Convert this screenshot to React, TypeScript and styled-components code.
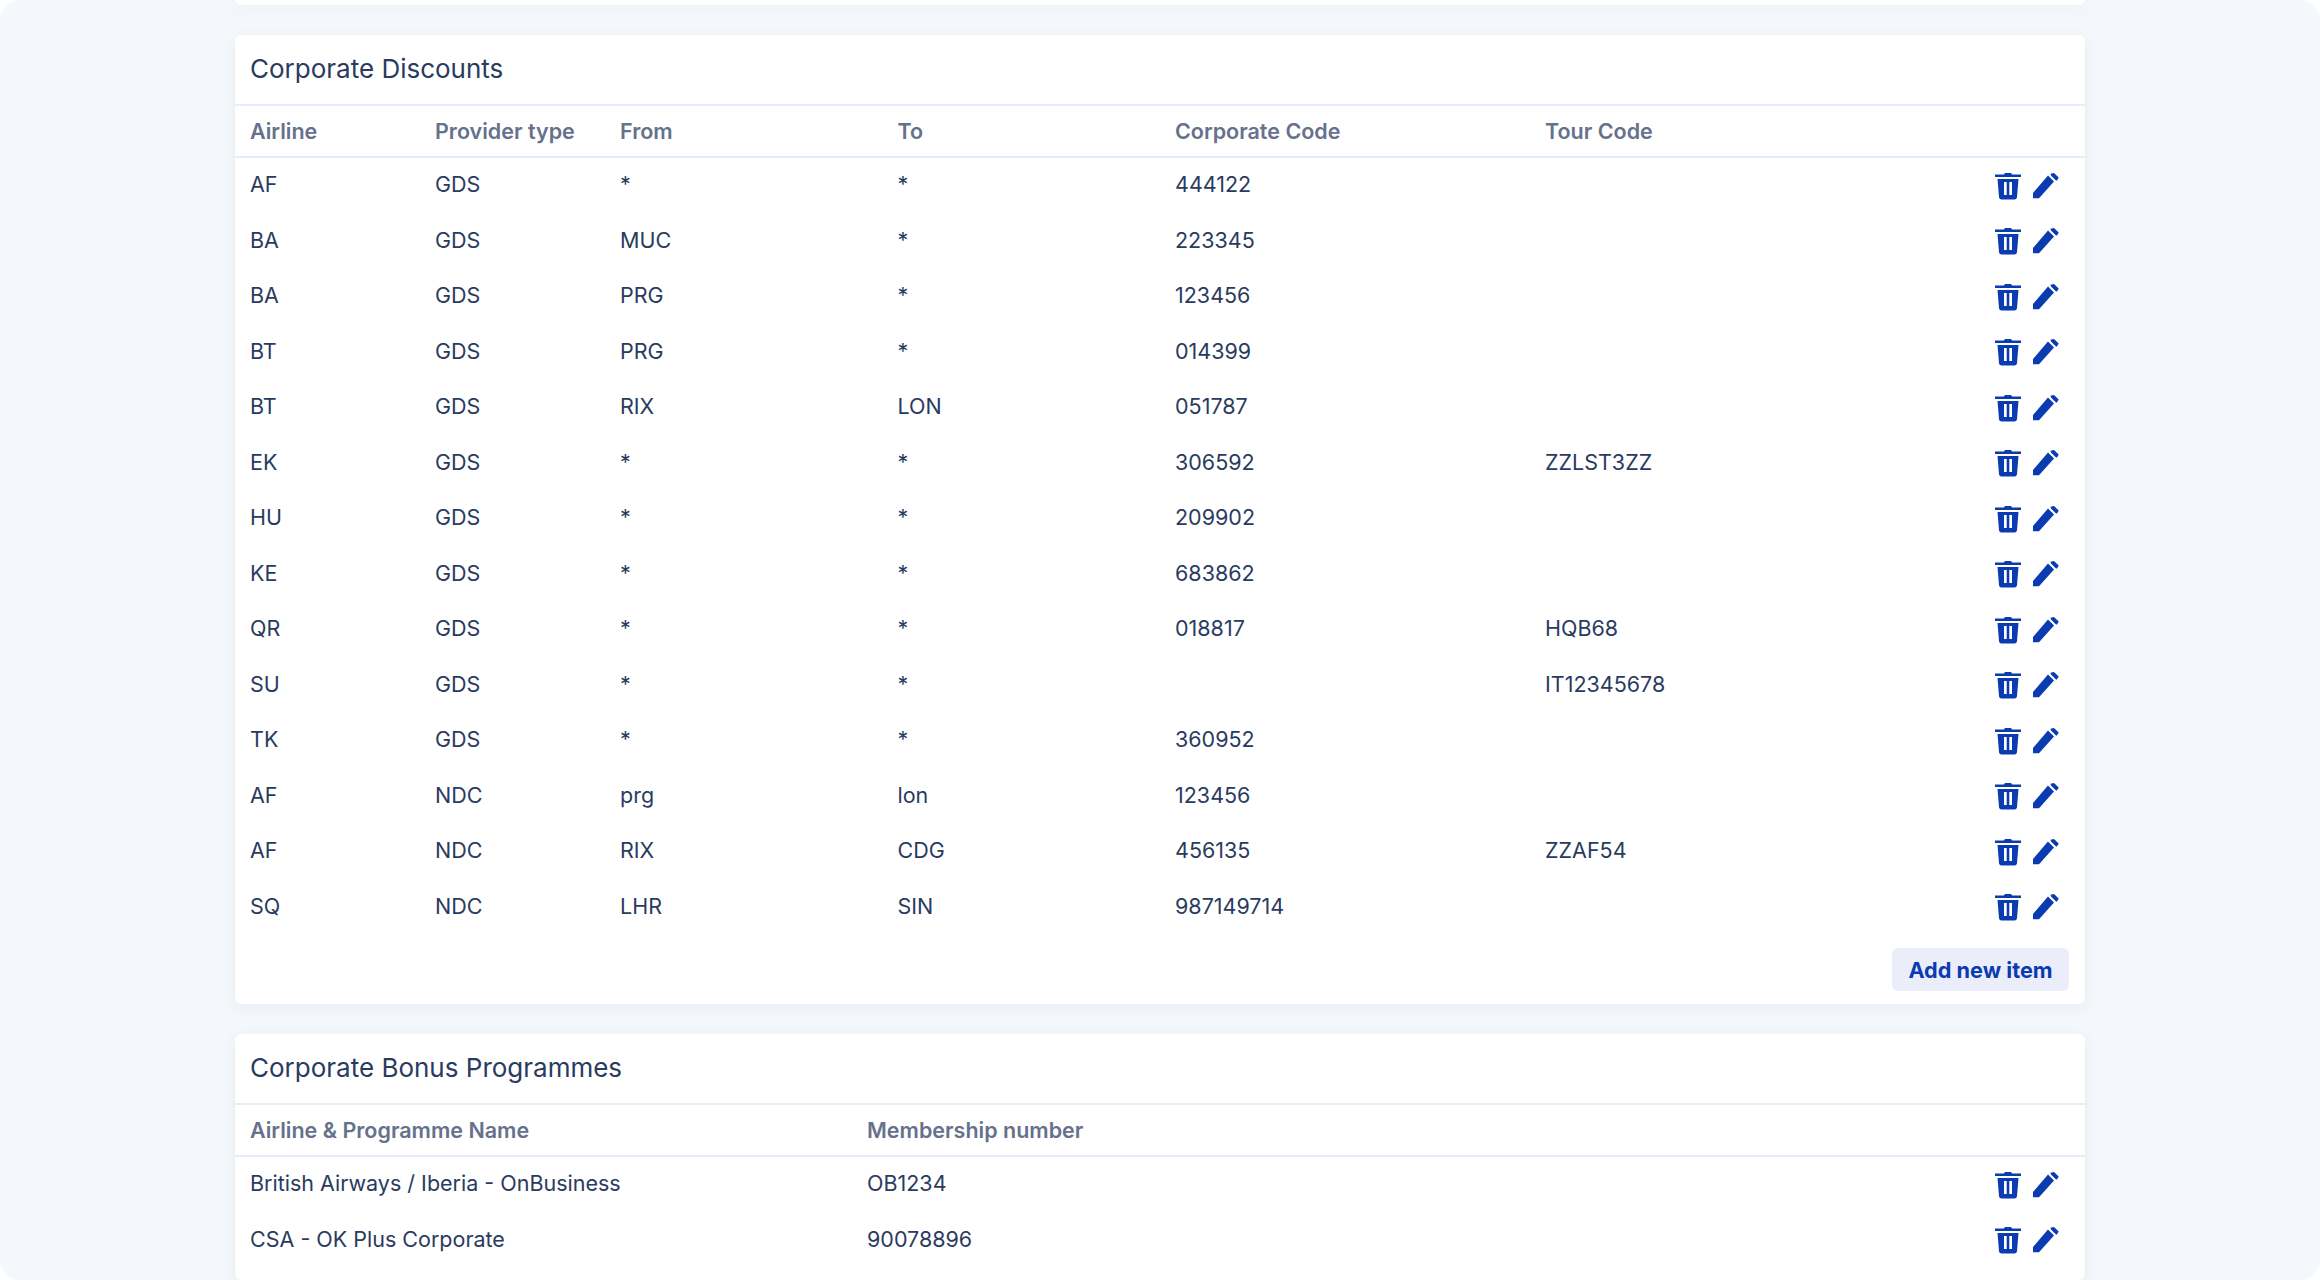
import { createGlobalStyle } from "styled-components"
import styled from "styled-components"

const GlobalStyle = createGlobalStyle`
  html, body {
    margin: 0;
    height: 1280px;
    overflow: hidden;
    background: #fff;
  }
  * {
    box-sizing: border-box;
  }
`

const Page = styled.div`
  display: flex;
  flex-direction: column;
  gap: 30px;
  height: 1280px;
  padding: 0 235px;
  overflow: hidden;
  border-radius: 20px;
  background: #f4f8fc;
  font-family: Inter, "Noto Sans", sans-serif;
  color: #2a3b60;
`

const Card = styled.section`
  background: #fff;
  border-radius: 6px;
  box-shadow: 0 3px 14px rgba(40, 70, 120, 0.07);
`

const TopStub = styled(Card)`
  flex: none;
  height: 5px;
  border-radius: 0 0 6px 6px;
`

const LastCard = styled(Card)`
  flex: 1;
`

const CardTitle = styled.h2`
  margin: 0;
  height: 71px;
  padding: 0 15px 2px;
  display: flex;
  align-items: center;
  font-size: 26px;
  font-weight: 400;
  border-bottom: 2px solid #e4eef8;
`

const Row = styled.div<{ $cols: string }>`
  display: grid;
  grid-template-columns: ${(p) => p.$cols};
  align-items: center;
  padding: 0 15px;
  height: 55.5px;
  font-size: 21.5px;
`

const HeaderRow = styled(Row)`
  height: 52px;
  font-weight: 600;
  color: #66718c;
  border-bottom: 2px solid #e4eef8;
`

const Cell = styled.span`
  margin-bottom: 3px;
`

const Actions = styled.div`
  display: flex;
  justify-content: flex-end;
  align-items: center;
  gap: 12px;
  padding-right: 11px;
`

const Footer = styled.div`
  display: flex;
  justify-content: flex-end;
  padding: 13px 16px 13px;
`

const AddButton = styled.button`
  width: 177px;
  height: 43px;
  border: 0;
  border-radius: 6px;
  background: #ebeefa;
  color: #0b3bb0;
  font-family: inherit;
  font-size: 21.7px;
  font-weight: 700;
`

const TrashIcon = () => (
  <svg width="26" height="28" viewBox="0 0 26 28" fill="#0b3bb0">
    <path d="M9 2.500C9 1.500 10 1 11 1h4c1 0 2 .5 2 1.500H26V5H0V2.500z" />
    <path fillRule="evenodd" d="M2.500 7h21l-1.500 18c-.1 1.500-1 2.500-2.500 2.500h-13C5 27.500 4.100 26.500 4 25zM9 10v13h2.700V10zM14.300 10v13h2.700V10z" />
  </svg>
)

const PencilIcon = () => (
  <svg width="26" height="26" viewBox="0 0 26 26" fill="#0b3bb0">
    <path d="M17.500 .8 L21 0 L25.700 4.500 L24 7.500 L23 7.500 L18 2.500z" />
    <path d="M15 2.500 L21 8.500 L6 25.300 L.6 25.300 Q0 25.300 0 24.700 L0 20z" />
  </svg>
)

const discountCols = "185px 185px 277.500px 277.500px 370px 1fr 80px"
const bonusCols = "617px 1fr 80px"

const discounts = [
  ["AF", "GDS", "*", "*", "444122", ""],
  ["BA", "GDS", "MUC", "*", "223345", ""],
  ["BA", "GDS", "PRG", "*", "123456", ""],
  ["BT", "GDS", "PRG", "*", "014399", ""],
  ["BT", "GDS", "RIX", "LON", "051787", ""],
  ["EK", "GDS", "*", "*", "306592", "ZZLST3ZZ"],
  ["HU", "GDS", "*", "*", "209902", ""],
  ["KE", "GDS", "*", "*", "683862", ""],
  ["QR", "GDS", "*", "*", "018817", "HQB68"],
  ["SU", "GDS", "*", "*", "", "IT12345678"],
  ["TK", "GDS", "*", "*", "360952", ""],
  ["AF", "NDC", "prg", "lon", "123456", ""],
  ["AF", "NDC", "RIX", "CDG", "456135", "ZZAF54"],
  ["SQ", "NDC", "LHR", "SIN", "987149714", ""],
]

const programmes = [
  ["British Airways / Iberia - OnBusiness", "OB1234"],
  ["CSA - OK Plus Corporate", "90078896"],
]

const RowActions = () => (
  <Actions>
    <TrashIcon />
    <PencilIcon />
  </Actions>
)

export default function App() {
  return (
    <Page>
      <GlobalStyle />
      <TopStub />
      <Card>
        <CardTitle>Corporate Discounts</CardTitle>
        <HeaderRow $cols={discountCols}>
          <span>Airline</span>
          <span>Provider type</span>
          <span>From</span>
          <span>To</span>
          <span>Corporate Code</span>
          <span>Tour Code</span>
          <span />
        </HeaderRow>
        {discounts.map((row, i) => (
          <Row $cols={discountCols} key={i}>
            {row.map((cell, j) => <Cell key={j}>{cell}</Cell>)}
            <RowActions />
          </Row>
        ))}
        <Footer>
          <AddButton>Add new item</AddButton>
        </Footer>
      </Card>
      <LastCard>
        <CardTitle>Corporate Bonus Programmes</CardTitle>
        <HeaderRow $cols={bonusCols}>
          <span>Airline &amp; Programme Name</span>
          <span>Membership number</span>
          <span />
        </HeaderRow>
        {programmes.map((row, i) => (
          <Row $cols={bonusCols} key={i}>
            {row.map((cell, j) => <Cell key={j}>{cell}</Cell>)}
            <RowActions />
          </Row>
        ))}
      </LastCard>
    </Page>
  )
}
